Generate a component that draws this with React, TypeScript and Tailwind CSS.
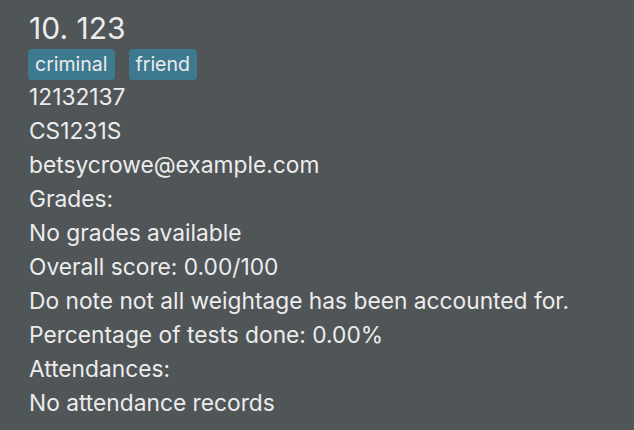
import React from 'react'

type Person = {
  index: number
  name: string
  tags: string[]
  phone: string
  course: string
  email: string
}

const person: Person = {
  index: 10,
  name: '123',
  tags: ['criminal', 'friend'],
  phone: '12132137',
  course: 'CS1231S',
  email: 'betsycrowe@example.com',
}

export default function App() {
  const lines = [
    person.phone,
    person.course,
    person.email,
    'Grades:',
    'No grades available',
    'Overall score: 0.00/100',
    'Do note not all weightage has been accounted for.',
    'Percentage of tests done: 0.00%',
    'Attendances:',
    'No attendance records',
  ]
  return (
    <div className="w-[634px] h-[430px] bg-[#505558] text-[#ececec] font-['Inter',sans-serif] overflow-hidden pl-[29px] pt-[10px]">
      {/* Header */}
      <div className="text-[30px] leading-[36px]">
        {person.index}. {person.name}
      </div>
      <div className="flex gap-[14px] mt-[3px] -ml-[1px]">
        {person.tags.map((tag) => (
          <span
            key={tag}
            className="bg-[#3d7a90] rounded-[4px] px-[7px] h-[31px] flex items-center text-[19.5px]"
          >
            {tag}
          </span>
        ))}
      </div>

      {/* Details */}
      <div className="text-[22.75px] leading-[34px]">
        {lines.map((line, i) => (
          <div key={i}>{line}</div>
        ))}
      </div>
    </div>
  )
}
